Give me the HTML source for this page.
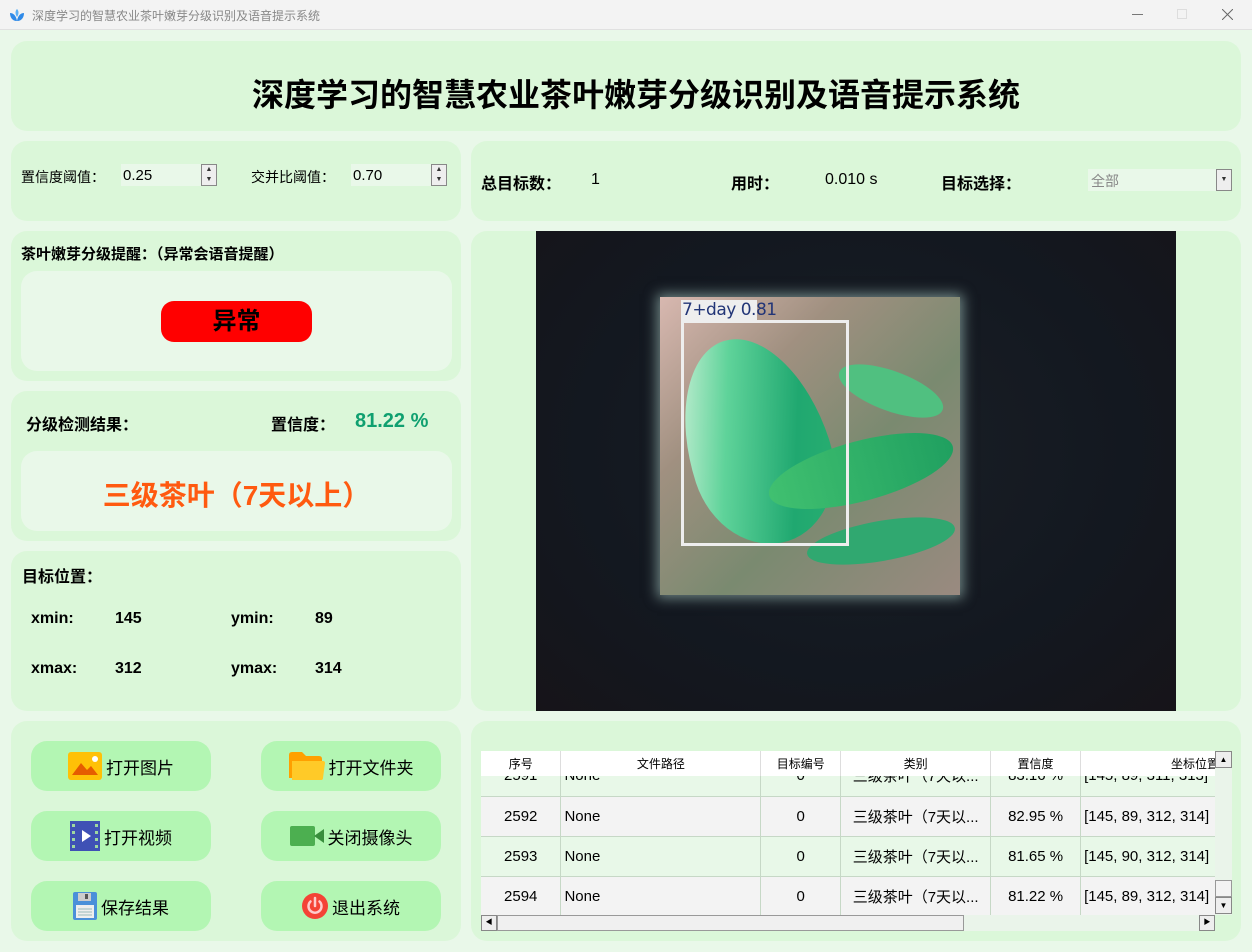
<!DOCTYPE html>
<html><head><meta charset="utf-8">
<style>
*{box-sizing:border-box;margin:0;padding:0}
body{width:1252px;height:952px;overflow:hidden;background:#e9f8e9;font-family:"Liberation Sans","Noto Sans CJK SC",sans-serif;position:relative;color:#000}
.a{position:absolute}
.p{position:absolute;background:#dbf7d9;border-radius:16px}
.in{position:absolute;background:#e9f8e9;border-radius:16px}
.b{font-weight:bold}
.btn{position:absolute;background:#b3f6b3;border-radius:16px;width:180px;height:50px;font-size:17px;display:flex;align-items:center;justify-content:center;gap:4px}
.spin{position:absolute;width:96px;height:22px;background:#e9f8e9;font-size:15px;padding:3px 2px}
.arr{position:absolute;right:0;top:0;width:16px;height:22px;border:1px solid #888;background:#eee;font-size:7px;line-height:10px;text-align:center;color:#333}
table{border-collapse:collapse;font-size:15px}
td{border-right:1px solid #c6d8c6;border-bottom:1px solid #c6d8c6;height:40px;text-align:center;white-space:nowrap;overflow:hidden}
</style></head><body>
<div class="a" style="left:0;top:0;width:1252px;height:30px;background:#f3f3f3;border-bottom:1px solid #e0e0e0"></div>
<svg class="a" style="left:9px;top:8px" width="16" height="14" viewBox="0 0 16 14"><path d="M8 13C3 13 1 9 1 5c3 0 6 2 7 8zM8 13c5 0 7-4 7-8-3 0-6 2-7 8z" fill="#2f8ae8"/><path d="M8 9C6 6 6 3 8 1c2 2 2 5 0 8z" fill="#5bb0f5"/></svg>
<div class="a" style="left:32px;top:7px;font-size:12px;color:#888">深度学习的智慧农业茶叶嫩芽分级识别及语音提示系统</div>
<div class="a" style="left:1132px;top:14px;width:11px;height:1px;background:#777"></div>
<div class="a" style="left:1177px;top:9px;width:10px;height:10px;border:1px solid #ddd"></div>
<svg class="a" style="left:1222px;top:9px" width="11" height="11"><path d="M0 0L11 11M11 0L0 11" stroke="#666" stroke-width="1"/></svg>

<div class="p" style="left:11px;top:41px;width:1230px;height:90px"></div>
<div class="a b" style="left:0;top:70px;width:1272px;text-align:center;font-size:32px;letter-spacing:0px">深度学习的智慧农业茶叶嫩芽分级识别及语音提示系统</div>

<div class="p" style="left:11px;top:141px;width:450px;height:80px"></div>
<div class="a" style="left:21px;top:167px;font-size:14px">置信度阈值：</div>
<div class="spin" style="left:121px;top:164px">0.25<div class="arr">▲<br>▼</div></div>
<div class="a" style="left:251px;top:167px;font-size:14px">交并比阈值：</div>
<div class="spin" style="left:351px;top:164px">0.70<div class="arr">▲<br>▼</div></div>

<div class="p" style="left:471px;top:141px;width:770px;height:80px"></div>
<div class="a b" style="left:481px;top:170px;font-size:16px">总目标数：</div>
<div class="a" style="left:591px;top:171px;font-size:16px">1</div>
<div class="a b" style="left:731px;top:170px;font-size:16px">用时：</div>
<div class="a" style="left:825px;top:171px;font-size:16px">0.010 s</div>
<div class="a b" style="left:941px;top:170px;font-size:16px">目标选择：</div>
<div class="a" style="left:1088px;top:169px;width:144px;height:22px;background:#e9f8e9;font-size:14px;color:#888;padding:2px 3px">全部<div class="arr" style="height:22px;font-size:7px;line-height:20px">▼</div></div>

<div class="p" style="left:11px;top:231px;width:450px;height:150px"></div>
<div class="a b" style="left:21px;top:243px;font-size:15px">茶叶嫩芽分级提醒：（异常会语音提醒）</div>
<div class="in" style="left:21px;top:271px;width:431px;height:100px"></div>
<div class="a b" style="left:161px;top:301px;width:151px;height:41px;background:#f00;border-radius:13px;text-align:center;font-size:24px;line-height:41px">异常</div>

<div class="p" style="left:11px;top:391px;width:450px;height:150px"></div>
<div class="a b" style="left:26px;top:411px;font-size:16px">分级检测结果：</div>
<div class="a b" style="left:271px;top:411px;font-size:16px">置信度：</div>
<div class="a b" style="left:355px;top:410px;font-size:20px;color:#10a070">81.22 %</div>
<div class="in" style="left:21px;top:451px;width:431px;height:80px"></div>
<div class="a b" style="left:21px;top:474px;width:431px;text-align:center;font-size:28px;color:#ff5a10">三级茶叶（7天以上）</div>

<div class="p" style="left:11px;top:551px;width:450px;height:160px"></div>
<div class="a b" style="left:22px;top:563px;font-size:16px">目标位置：</div>
<div class="a b" style="left:31px;top:610px;font-size:16px">xmin:</div>
<div class="a b" style="left:115px;top:610px;font-size:16px">145</div>
<div class="a b" style="left:231px;top:610px;font-size:16px">ymin:</div>
<div class="a b" style="left:315px;top:610px;font-size:16px">89</div>
<div class="a b" style="left:31px;top:660px;font-size:16px">xmax:</div>
<div class="a b" style="left:115px;top:660px;font-size:16px">312</div>
<div class="a b" style="left:231px;top:660px;font-size:16px">ymax:</div>
<div class="a b" style="left:315px;top:660px;font-size:16px">314</div>

<div class="p" style="left:471px;top:231px;width:770px;height:480px"></div>
<div class="a" style="left:536px;top:231px;width:640px;height:480px;background:radial-gradient(ellipse at 50% 45%,#1a1f26 0%,#131820 60%,#161419 100%);overflow:hidden">
 <div class="a" style="left:124px;top:66px;width:300px;height:298px;background:linear-gradient(135deg,#d8b8b0 0%,#a09080 30%,#7a8a70 60%,#9a8a80 100%);box-shadow:0 0 12px 3px rgba(200,240,230,.5)"></div>
 <div class="a" style="left:150px;top:105px;width:140px;height:210px;background:linear-gradient(110deg,#e9f8e8 0%,#5fd39a 35%,#20a870 70%,#2bb070 100%);border-radius:50% 50% 50% 50%/60% 60% 40% 40%;transform:rotate(-18deg)"></div>
 <div class="a" style="left:230px;top:210px;width:190px;height:60px;background:linear-gradient(90deg,#40c070,#20a060);border-radius:50%;transform:rotate(-15deg)"></div>
 <div class="a" style="left:300px;top:140px;width:110px;height:40px;background:#50c080;border-radius:50%;transform:rotate(20deg)"></div>
 <div class="a" style="left:270px;top:290px;width:150px;height:40px;background:#30a870;border-radius:50%;transform:rotate(-10deg)"></div>
 <div class="a" style="left:145px;top:89px;width:168px;height:226px;border:3px solid #eee"></div>
 <div class="a" style="left:145px;top:69px;width:76px;height:21px;background:#eee;color:#223577;font-size:17px;line-height:21px;padding-left:1px;white-space:nowrap;font-family:'DejaVu Sans',sans-serif;letter-spacing:-0.5px">7+day 0.81</div>
</div>

<div class="p" style="left:11px;top:721px;width:450px;height:220px"></div>
<div class="btn" style="left:31px;top:741px"><svg width="34" height="28" viewBox="0 0 34 28"><rect width="34" height="28" rx="3" fill="#ffc107"/><path d="M4 23l9-12 6 7 4-4 7 9z" fill="#e65c00"/><circle cx="27" cy="7" r="3" fill="#fff"/></svg>打开图片</div>
<div class="btn" style="left:261px;top:741px"><svg width="36" height="28" viewBox="0 0 36 28"><path d="M0 3q0-3 3-3h10l4 4h13q3 0 3 3v19H0z" fill="#ffa000"/><path d="M3 9h31q2 0 2 2l-2 15q0 2-2 2H3z" fill="#ffca28"/></svg>打开文件夹</div>
<div class="btn" style="left:31px;top:811px"><svg width="30" height="30" viewBox="0 0 30 30"><rect width="30" height="30" fill="#3f51b5"/><g fill="#9fd8a0"><rect x="2" y="3" width="3" height="3"/><rect x="2" y="10" width="3" height="3"/><rect x="2" y="17" width="3" height="3"/><rect x="2" y="24" width="3" height="3"/><rect x="25" y="3" width="3" height="3"/><rect x="25" y="10" width="3" height="3"/><rect x="25" y="17" width="3" height="3"/><rect x="25" y="24" width="3" height="3"/></g><path d="M12 9l9 6-9 6z" fill="#fff"/></svg>打开视频</div>
<div class="btn" style="left:261px;top:811px"><svg width="34" height="20" viewBox="0 0 34 20"><rect width="25" height="20" rx="2" fill="#4caf50"/><path d="M24 10l10-7v14z" fill="#388e3c"/></svg>关闭摄像头</div>
<div class="btn" style="left:31px;top:881px"><svg width="24" height="28" viewBox="0 0 24 28"><rect width="24" height="28" rx="2" fill="#4a90d9"/><rect x="5" y="1" width="13" height="8" fill="#ccc"/><rect x="12" y="2" width="3" height="5" fill="#555"/><rect x="3" y="13" width="18" height="13" fill="#eee"/><g stroke="#9bb" stroke-width="1"><path d="M5 17h14M5 20h14M5 23h14"/></g></svg>保存结果</div>
<div class="btn" style="left:261px;top:881px"><svg width="26" height="26" viewBox="0 0 26 26"><circle cx="13" cy="13" r="13" fill="#f44336"/><path d="M8.5 8.5a6.5 6.5 0 1 0 9 0" fill="none" stroke="#fcc" stroke-width="2.5" stroke-linecap="round"/><path d="M13 5v8" stroke="#fcc" stroke-width="2.5" stroke-linecap="round"/></svg>退出系统</div>

<div class="p" style="left:471px;top:721px;width:770px;height:220px"></div>
<div class="a" style="left:481px;top:751px;width:734px;height:164px;overflow:hidden">
<table style="position:absolute;left:0;top:5px;width:800px">
<colgroup><col style="width:80px"><col style="width:200px"><col style="width:80px"><col style="width:150px"><col style="width:90px"><col style="width:200px"></colgroup>
<tr style="background:#e8f8e8;height:40px"><td>2591</td><td style="text-align:left;padding-left:3px">None</td><td>0</td><td>三级茶叶（7天以...</td><td>83.16 %</td><td style="text-align:left;padding-left:3px">[145, 89, 311, 313]</td></tr>
<tr style="background:#f3f3f3"><td>2592</td><td style="text-align:left;padding-left:3px">None</td><td>0</td><td>三级茶叶（7天以...</td><td>82.95 %</td><td style="text-align:left;padding-left:3px">[145, 89, 312, 314]</td></tr>
<tr style="background:#e8f8e8"><td>2593</td><td style="text-align:left;padding-left:3px">None</td><td>0</td><td>三级茶叶（7天以...</td><td>81.65 %</td><td style="text-align:left;padding-left:3px">[145, 90, 312, 314]</td></tr>
<tr style="background:#f3f3f3"><td>2594</td><td style="text-align:left;padding-left:3px">None</td><td>0</td><td>三级茶叶（7天以...</td><td>81.22 %</td><td style="text-align:left;padding-left:3px">[145, 89, 312, 314]</td></tr>
</table>
<table style="position:absolute;left:0;top:0;width:800px;background:#fff;font-size:12px">
<colgroup><col style="width:80px"><col style="width:200px"><col style="width:80px"><col style="width:150px"><col style="width:90px"><col style="width:200px"></colgroup>
<tr><td style="height:25px;border-bottom:none;border-right:1px solid #ddd">序号</td><td style="height:25px;border-bottom:none;border-right:1px solid #ddd">文件路径</td><td style="height:25px;border-bottom:none;border-right:1px solid #ddd">目标编号</td><td style="height:25px;border-bottom:none;border-right:1px solid #ddd">类别</td><td style="height:25px;border-bottom:none;border-right:1px solid #ddd">置信度</td><td style="height:25px;border-bottom:none;text-align:left;padding-left:90px">坐标位置</td></tr>
</table>
</div>
<div class="a" style="left:1215px;top:751px;width:17px;height:164px;background:#eaf4ea"></div>
<div class="a" style="left:1215px;top:751px;width:17px;height:17px;background:#eee;border:1px solid #888;font-size:8px;text-align:center;line-height:15px">▲</div>
<div class="a" style="left:1215px;top:880px;width:17px;height:17px;background:#f3f3f3;border:1px solid #999"></div>
<div class="a" style="left:1215px;top:897px;width:17px;height:17px;background:#eee;border:1px solid #888;font-size:8px;text-align:center;line-height:15px">▼</div>
<div class="a" style="left:481px;top:915px;width:734px;height:16px;background:#eaf4ea"></div>
<div class="a" style="left:481px;top:915px;width:16px;height:16px;background:#eee;border:1px solid #888;font-size:7px;text-align:center;line-height:14px">◀</div>
<div class="a" style="left:497px;top:915px;width:467px;height:16px;background:#f0f0f0;border:1px solid #999"></div>
<div class="a" style="left:1199px;top:915px;width:16px;height:16px;background:#eee;border:1px solid #888;font-size:7px;text-align:center;line-height:14px">▶</div>
</body></html>
